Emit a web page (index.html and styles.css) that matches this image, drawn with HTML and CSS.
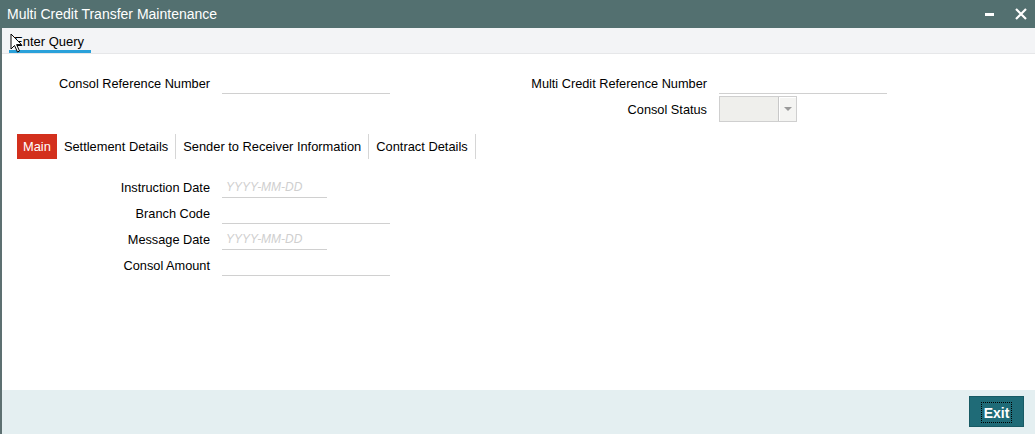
FILE: index.html
```html
<!DOCTYPE html>
<html>
<head>
<meta charset="utf-8">
<title>Multi Credit Transfer Maintenance</title>
<link rel="stylesheet" href="styles.css">
</head>
<body>
<div class="window">
  <div class="titlebar">
    <span class="title">Multi Credit Transfer Maintenance</span>
    <div class="win-controls">
      <span class="min"></span>
      <svg class="close" width="12" height="12" viewBox="0 0 12 12"><path d="M1 1L11 11M11 1L1 11" stroke="#fff" stroke-width="2.2"/></svg>
    </div>
  </div>
  <div class="body">
    <div class="toolbar">
      <span class="tool-item">Enter Query</span>
      <svg class="cursor" width="14" height="20" viewBox="0 0 14 20"><path d="M1 1L1 16L4.5 12.5L7.5 19L9.5 18L6.6 11.6L11.5 11.6Z" fill="#fff" stroke="#000" stroke-width="1" stroke-linejoin="miter"/></svg>
    </div>
    <div class="content">
      <div class="header">
        <div class="group group-left">
          <div class="row">
            <label class="lbl">Consol Reference Number</label>
            <span class="inp wide"></span>
          </div>
        </div>
        <div class="group group-right">
          <div class="row">
            <label class="lbl">Multi Credit Reference Number</label>
            <span class="inp wide"></span>
          </div>
          <div class="row">
            <label class="lbl">Consol Status</label>
            <span class="select"><span class="sel-btn"><span class="tri"></span></span></span>
          </div>
        </div>
      </div>
      <div class="tabs">
        <span class="tab active">Main</span>
        <span class="tab">Settlement Details</span>
        <span class="tab">Sender to Receiver Information</span>
        <span class="tab">Contract Details</span>
      </div>
      <div class="group group-left tab-body">
        <div class="row">
          <label class="lbl">Instruction Date</label>
          <span class="inp date">YYYY-MM-DD</span>
        </div>
        <div class="row">
          <label class="lbl">Branch Code</label>
          <span class="inp wide"></span>
        </div>
        <div class="row">
          <label class="lbl">Message Date</label>
          <span class="inp date">YYYY-MM-DD</span>
        </div>
        <div class="row">
          <label class="lbl">Consol Amount</label>
          <span class="inp wide"></span>
        </div>
      </div>
    </div>
    <div class="footer">
      <button class="exit"><span class="exit-text">Exit</span></button>
    </div>
  </div>
</div>
</body>
</html>
```
FILE: styles.css
```css
* { box-sizing: border-box; }
html, body { margin: 0; padding: 0; }
body {
  width: 1035px;
  height: 434px;
  overflow: hidden;
  font-family: Arial, "Liberation Sans", sans-serif;
  font-size: 12.75px;
  color: #000;
  background: #fff;
}
.window { height: 434px; display: flex; flex-direction: column; }
.titlebar {
  height: 28px;
  background: #537070;
  color: #fff;
  display: flex;
  align-items: center;
  justify-content: space-between;
  padding: 0 8px 0 7px;
  flex: none;
}
.title { font-size: 14px; line-height: 28px; }
.win-controls { display: flex; align-items: center; gap: 21px; }
.min { width: 9px; height: 3px; background: #fff; display: block; }
.close { display: block; }
.body {
  flex: 1;
  display: flex;
  flex-direction: column;
  border-left: 2px solid #5d7071;
}
.toolbar {
  height: 26px;
  background: #f3f4f6;
  border-bottom: 1px solid #e6e7e9;
  position: relative;
  padding-left: 7px;
  flex: none;
}
.tool-item {
  display: inline-block;
  width: 82px;
  height: 25px;
  padding: 5px 0 0 5px;
  line-height: 17px;
  font-size: 13px;
  border-bottom: 3px solid #2aa1da;
}
.cursor { position: absolute; left: 8px; top: 5px; }
.content { flex: 1; padding-top: 16px; }
.header { display: flex; gap: 110px; }
.group { display: flex; flex-direction: column; }
.row { display: flex; align-items: center; height: 26px; gap: 12px; }
.group-left .lbl { width: 208px; }
.group-right .lbl { width: 207px; }
.lbl { text-align: right; white-space: nowrap; }
.inp {
  display: block;
  height: 22px;
  border-bottom: 1px solid #d0d0d0;
  font-size: 12px;
  font-style: italic;
  color: #cfcfcf;
  line-height: 22px;
  padding-left: 4px;
}
.header .inp { margin-bottom: 1px; }
.inp.wide { width: 168px; }
.inp.date { width: 105px; }
.select {
  display: flex;
  justify-content: flex-end;
  width: 78px;
  height: 26px;
  background: #efefec;
  border: 1px solid #cfcfcf;
}
.sel-btn {
  width: 18px;
  height: 24px;
  border-left: 1px solid #c8c8c8;
  background: #f4f4f2;
  box-shadow: inset 1px 1px 0 #fff;
  display: flex;
  align-items: center;
  justify-content: center;
}
.tri {
  width: 0; height: 0;
  border-left: 4px solid transparent;
  border-right: 4px solid transparent;
  border-top: 4px solid #9a9a9a;
}
.tabs {
  display: flex;
  margin: 12px 0 0 15px;
  height: 25px;
  font-size: 12.875px;
}
.tab {
  padding: 0 7px;
  line-height: 25px;
  border-right: 1px solid #d6d6d6;
  white-space: nowrap;
}
.tab.active {
  background: #d3301d;
  color: #fff;
  padding: 0 6px;
  border-right: none;
}
.tab-body { margin-top: 15px; }
.footer {
  height: 44px;
  flex: none;
  background: #e4eff1;
  display: flex;
  justify-content: flex-end;
  align-items: flex-start;
  padding: 6px 11px 0 0;
}
.exit {
  width: 55px;
  height: 31px;
  background: #1f6b77;
  border: 1px solid #175a64;
  color: #fff;
  font-family: Arial, "Liberation Sans", sans-serif;
  font-weight: bold;
  font-size: 14px;
  padding: 0;
  display: flex;
  align-items: center;
  justify-content: center;
}
.exit-text {
  outline: 1px dotted #000;
  padding: 1px 2px 0;
  line-height: 18px;
  margin-top: 2px;
}
```
